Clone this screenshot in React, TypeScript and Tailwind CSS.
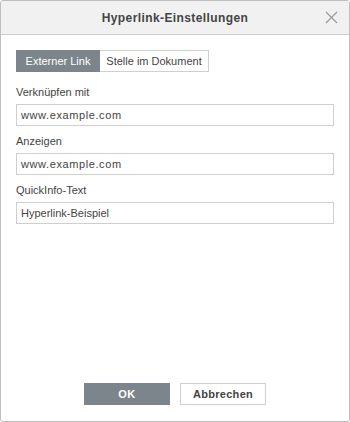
import React, { useState } from 'react';

const fields = [
  { label: 'Verknüpfen mit', value: 'www.example.com' },
  { label: 'Anzeigen', value: 'www.example.com' },
  { label: 'QuickInfo-Text', value: 'Hyperlink-Beispiel' },
];

export default function App() {
  const [tab, setTab] = useState(0);

  return (
    <div className="w-[350px] h-[422px] bg-white text-[#444] font-['Liberation_Sans',Arial,sans-serif]">
      <div className="flex flex-col h-full border border-[#bfbfbf] rounded-[3px] overflow-hidden">
        <div className="relative flex items-center justify-center h-[34px] shrink-0 bg-[#f1f1f1] border-b border-[#cbcbcb]">
          <span className="text-[12px] font-bold tracking-[0.4px] text-[#444]">Hyperlink-Einstellungen</span>
          <button className="absolute right-[11px] top-[10px] w-[13px] h-[13px]">
            <svg viewBox="0 0 13 13" className="w-[13px] h-[13px]" stroke="#9a9a9a" strokeWidth="1.2">
              <path d="M1 1 L12 12 M12 1 L1 12" />
            </svg>
          </button>
        </div>

        <div className="flex-1 flex flex-col px-[15px] pt-[15px]">
          <div className="flex h-[22px]">
            <button
              onClick={() => setTab(0)}
              className={`w-[84px] text-[11px] border ${tab === 0 ? 'bg-[#7d858c] border-[#7d858c] text-white' : 'bg-white border-[#cfcfcf]'}`}
            >
              Externer Link
            </button>
            <button
              onClick={() => setTab(1)}
              className={`w-[109px] text-[11px] border border-l-0 ${tab === 1 ? 'bg-[#7d858c] border-[#7d858c] text-white' : 'bg-white border-[#cfcfcf] text-[#444]'}`}
            >
              Stelle im Dokument
            </button>
          </div>

          <div className="flex flex-col gap-[9px] mt-[14px]">
            {fields.map((f) => (
              <div key={f.label} className="flex flex-col">
                <label className="text-[11px] leading-[13px] mb-[5px]">{f.label}</label>
                <input
                  defaultValue={f.value}
                  className={`h-[22px] w-[318px] border border-[#cfcfcf] px-[4px] text-[11px] text-[#444] outline-none ${f.value.startsWith('www') ? 'tracking-[0.6px]' : ''}`}
                />
              </div>
            ))}
          </div>

          <div className="flex-1" />

          <div className="flex justify-center gap-[10px] mb-[16px]">
            <button className="w-[86px] h-[22px] bg-[#7d858c] text-white text-[11px] font-bold tracking-[0.5px]">OK</button>
            <button className="w-[86px] h-[22px] bg-white border border-[#cfcfcf] text-[11px] font-bold text-[#444] tracking-[0.3px]">Abbrechen</button>
          </div>
        </div>
      </div>
    </div>
  );
}
